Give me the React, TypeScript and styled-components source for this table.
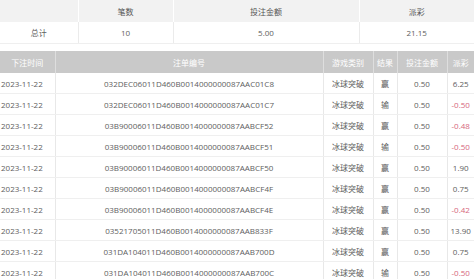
import styled, { createGlobalStyle } from "styled-components";

const GlobalStyle = createGlobalStyle`
  html, body {
    margin: 0;
    padding: 0;
    background: #ffffff;
  }
  body {
    font-family: "Open Sans", "Noto Sans CJK SC", sans-serif;
    color: #5e5e5e;
  }
`;

const Page = styled.div`
  width: 474px;
  display: flex;
  flex-direction: column;
  gap: 7px;
`;

const Table = styled.table`
  width: 474px;
  border-collapse: collapse;
  table-layout: fixed;
  font-size: 8px;
`;

const SumHead = styled.th`
  height: 22px;
  padding: 0;
  background: #f2f2f2;
  color: #555555;
  font-weight: 400;
  text-align: center;
  border-left: 1px solid #ffffff;
  &:first-child {
    border-left: none;
  }
`;

const SumCell = styled.td`
  height: 21px;
  padding: 0;
  text-align: center;
  color: #5e5e5e;
  border-left: 1px solid #ebebeb;
  border-bottom: 1px solid #efefef;
  &:first-child {
    border-left: none;
  }
`;

const Head = styled.th`
  height: 22px;
  padding: 0;
  background: #c9c9c9;
  color: #ffffff;
  font-weight: 400;
  text-align: center;
  border-left: 1px solid #dedede;
  white-space: nowrap;
  overflow: hidden;
  &:first-child {
    border-left: none;
  }
`;

const Cell = styled.td<{ $align?: "left" | "center"; $neg?: boolean }>`
  height: 20px;
  padding: ${(p) => (p.$align === "left" ? "0 0 0 1px" : "0")};
  text-align: ${(p) => p.$align ?? "center"};
  color: ${(p) => (p.$neg ? "#d6667c" : "#5e5e5e")};
  border-left: 1px solid #e8e8e8;
  border-bottom: 1px solid #efefef;
  white-space: nowrap;
  overflow: hidden;
  &:first-child {
    border-left: none;
  }
`;

type Row = { id: string; result: string; payout: string };

const rows: Row[] = [
  { id: "032DEC06011D460B0014000000087AAC01C8", result: "赢", payout: "6.25" },
  { id: "032DEC06011D460B0014000000087AAC01C7", result: "输", payout: "-0.50" },
  { id: "03B90006011D460B0014000000087AABCF52", result: "赢", payout: "-0.48" },
  { id: "03B90006011D460B0014000000087AABCF51", result: "输", payout: "-0.50" },
  { id: "03B90006011D460B0014000000087AABCF50", result: "赢", payout: "1.90" },
  { id: "03B90006011D460B0014000000087AABCF4F", result: "赢", payout: "0.75" },
  { id: "03B90006011D460B0014000000087AABCF4E", result: "赢", payout: "-0.42" },
  { id: "03521705011D460B0014000000087AAB833F", result: "赢", payout: "13.90" },
  { id: "031DA104011D460B0014000000087AAB700D", result: "赢", payout: "0.75" },
  { id: "031DA104011D460B0014000000087AAB700C", result: "输", payout: "-0.50" },
];

export default function App() {
  return (
    <>
      <GlobalStyle />
      <Page>
        <Table>
          <colgroup>
            <col style={{ width: 78 }} />
            <col style={{ width: 95 }} />
            <col style={{ width: 186 }} />
            <col style={{ width: 115 }} />
          </colgroup>
          <thead>
            <tr>
              <SumHead></SumHead>
              <SumHead>笔数</SumHead>
              <SumHead>投注金额</SumHead>
              <SumHead>派彩</SumHead>
            </tr>
          </thead>
          <tbody>
            <tr>
              <SumCell>总计</SumCell>
              <SumCell>10</SumCell>
              <SumCell>5.00</SumCell>
              <SumCell>21.15</SumCell>
            </tr>
          </tbody>
        </Table>

        <Table>
          <colgroup>
            <col style={{ width: 55 }} />
            <col style={{ width: 268 }} />
            <col style={{ width: 50 }} />
            <col style={{ width: 24 }} />
            <col style={{ width: 50 }} />
            <col style={{ width: 27 }} />
          </colgroup>
          <thead>
            <tr>
              <Head>下注时间</Head>
              <Head>注单编号</Head>
              <Head>游戏类别</Head>
              <Head>结果</Head>
              <Head>投注金额</Head>
              <Head>派彩</Head>
            </tr>
          </thead>
          <tbody>
            {rows.map((r) => (
              <tr key={r.id}>
                <Cell $align="left">2023-11-22</Cell>
                <Cell>{r.id}</Cell>
                <Cell>冰球突破</Cell>
                <Cell>{r.result}</Cell>
                <Cell>0.50</Cell>
                <Cell $neg={r.payout.startsWith("-")}>{r.payout}</Cell>
              </tr>
            ))}
          </tbody>
        </Table>
      </Page>
    </>
  );
}
